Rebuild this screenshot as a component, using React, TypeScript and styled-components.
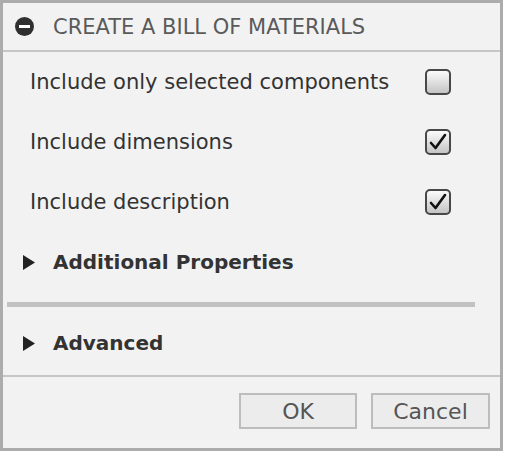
import React from 'react';
import styled, { createGlobalStyle } from 'styled-components';

const GlobalStyle = createGlobalStyle`
  html, body {
    margin: 0;
    padding: 0;
    background: #ffffff;
  }
  body {
    font-family: "DejaVu Sans", Verdana, sans-serif;
  }
`;

const Dialog = styled.div`
  box-sizing: border-box;
  width: 503px;
  height: 451px;
  border: 3px solid #acacac;
  background: #f2f2f2;
  display: flex;
  flex-direction: column;
`;

const Header = styled.div`
  height: 47px;
  display: flex;
  align-items: center;
  padding-left: 12px;
  gap: 19px;
  border-bottom: 2px solid #c6c6c6;
  color: #5a5a5a;
  font-size: 21px;
`;

const Body = styled.div`
  flex: 1;
  display: flex;
  flex-direction: column;
`;

const OptionRow = styled.div`
  height: 60px;
  display: flex;
  align-items: center;
  justify-content: space-between;
  padding: 0 49px 0 27px;
  font-size: 21px;
  color: #333333;
`;

const Box = styled.div`
  box-sizing: border-box;
  width: 26px;
  height: 26px;
  border: 2px solid #484848;
  border-radius: 5px;
  background: linear-gradient(#fbfbfb, #c4c4c4);
  display: flex;
  align-items: center;
  justify-content: center;
`;

const Section = styled.div`
  height: 60px;
  display: flex;
  align-items: center;
  gap: 18px;
  padding-left: 20px;
  font-size: 20px;
  font-weight: bold;
  color: #333333;
`;

const Separator = styled.div`
  height: 5px;
  margin: 10px 25px 6px 4px;
  background: #c2c2c2;
`;

const Footer = styled.div`
  height: 73px;
  border-top: 2px solid #c6c6c6;
  display: flex;
  justify-content: flex-end;
  align-items: flex-start;
  gap: 14px;
  padding: 16px 10px 0 0;
  box-sizing: border-box;
`;

const Button = styled.button<{ $w: number }>`
  width: ${(p) => p.$w}px;
  height: 36px;
  border: 2px solid #bdbdbd;
  background: #ececec;
  color: #555555;
  font-family: "DejaVu Sans", Verdana, sans-serif;
  font-size: 22px;
  padding: 0;
`;

function Collapse() {
  return (
    <svg width="19" height="19" viewBox="0 0 19 19">
      <circle cx="9.5" cy="9.5" r="9.5" fill="#2f2f2f" />
      <rect x="4" y="8" width="11" height="3" fill="#ffffff" />
    </svg>
  );
}

function Triangle() {
  return (
    <svg width="12" height="15" viewBox="0 0 12 15">
      <polygon points="0,0 12,7.5 0,15" fill="#222222" />
    </svg>
  );
}

function Checkbox({ checked }: { checked?: boolean }) {
  return (
    <Box>
      {checked && (
        <svg width="18" height="18" viewBox="0 0 18 18">
          <path d="M2 10 L6.5 15 L16 2" fill="none" stroke="#111111" strokeWidth="2.6" strokeLinejoin="round" strokeLinecap="round" />
        </svg>
      )}
    </Box>
  );
}

const options = [
  { label: 'Include only selected components', checked: false },
  { label: 'Include dimensions', checked: true },
  { label: 'Include description', checked: true },
];

export default function App() {
  return (
    <>
      <GlobalStyle />
      <Dialog>
        <Header>
          <Collapse />
          <span>CREATE A BILL OF MATERIALS</span>
        </Header>
        <Body>
          {options.map((o) => (
            <OptionRow key={o.label}>
              <span>{o.label}</span>
              <Checkbox checked={o.checked} />
            </OptionRow>
          ))}
          <Section>
            <Triangle />
            <span>Additional Properties</span>
          </Section>
          <Separator />
          <Section>
            <Triangle />
            <span>Advanced</span>
          </Section>
        </Body>
        <Footer>
          <Button $w={118}>OK</Button>
          <Button $w={119}>Cancel</Button>
        </Footer>
      </Dialog>
    </>
  );
}
